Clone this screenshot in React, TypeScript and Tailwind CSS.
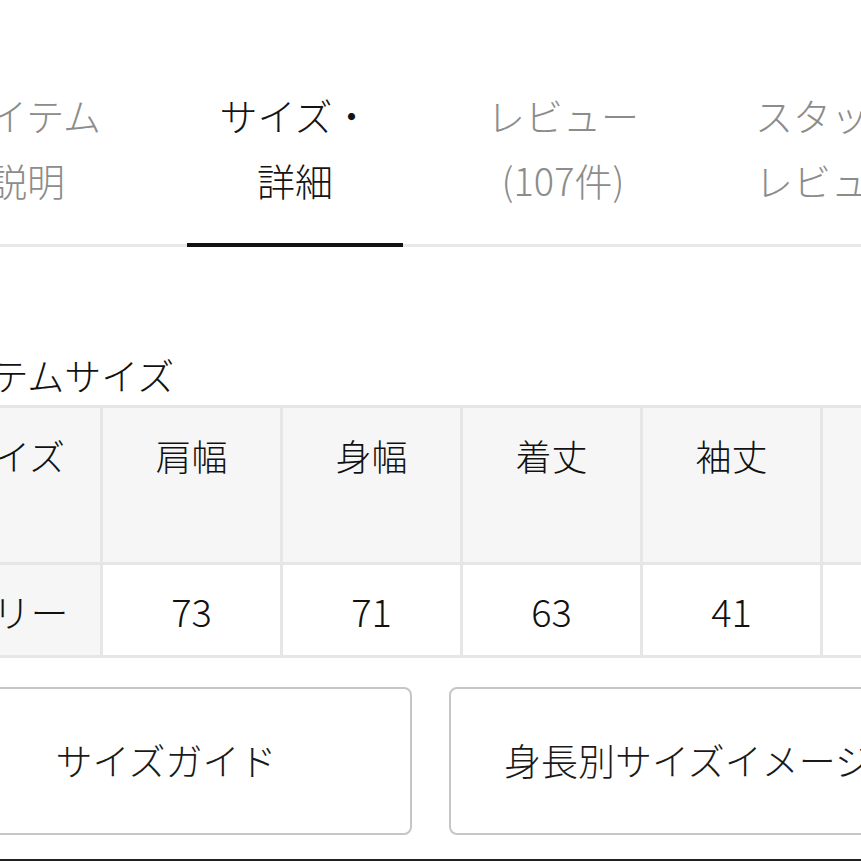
const tabs = [
  { top: 'アイテム', bottom: '説明', active: false },
  { top: 'サイズ・', bottom: '詳細', active: true },
  { top: 'レビュー', bottom: '(107件)', active: false },
  { top: 'スタッフ', bottom: 'レビュー', active: false },
];

const headers = ['サイズ', '肩幅', '身幅', '着丈', '袖丈', '裄丈'];
const values = ['フリー', '73', '71', '63', '41', '-'];

const App = () => {
  return (
    <div
      className="w-[861px] h-[861px] overflow-hidden bg-white text-[#1a1a1a] font-light"
      style={{ fontFamily: '"Noto Sans CJK JP", "Noto Sans", sans-serif' }}
    >
      {/* tabs */}
      <div className="flex w-[1076px] ml-[-107px] border-b-[3px] border-[#e8e8e8]">
        {tabs.map((tab) => (
          <div key={tab.top} className="w-[268px] shrink-0 flex flex-col items-center pt-[82px]">
            <div
              className={`text-[38px] leading-[65px] text-center whitespace-nowrap ${
                tab.active ? 'text-[#141414]' : 'text-[#8c8c8c]'
              }`}
            >
              <div>{tab.top}</div>
              <div>{tab.bottom}</div>
            </div>
            <div
              className={`mt-[31px] mb-[-3px] h-[4px] w-[216px] ${tab.active ? 'bg-[#111]' : 'bg-transparent'}`}
            />
          </div>
        ))}
      </div>

      <div className="ml-[-80px] w-[1021px]">
        <h3 className="mt-[103px] mb-[5px] text-[37px] leading-[50px] font-light whitespace-nowrap text-[#111]">
          アイテムサイズ
        </h3>

        {/* size table */}
        <div className="grid grid-cols-[repeat(6,177px)] gap-[3px] p-[3px] bg-[#e6e6e6] w-max">
          {headers.map((h) => (
            <div
              key={h}
              className="h-[154px] bg-[#f6f6f6] pt-[20px] text-center text-[36px] leading-[54px] text-[#111]"
            >
              {h}
            </div>
          ))}
          {values.map((v, idx) => (
            <div
              key={idx}
              className={`h-[90px] flex items-center justify-center text-[38px] text-[#111] ${
                idx === 0 ? 'bg-[#f6f6f6] text-[36px]' : 'bg-white'
              }`}
            >
              {idx === 5 ? '' : v}
            </div>
          ))}
        </div>

        {/* buttons */}
        <div className="mt-[29px] flex gap-[37px]">
          <button className="w-[492px] h-[148px] shrink-0 rounded-[8px] border-2 border-[#c6c6c6] bg-white text-[37px] text-[#1a1a1a] whitespace-nowrap">
            サイズガイド
          </button>
          <button className="w-[492px] h-[148px] shrink-0 rounded-[8px] border-2 border-[#c6c6c6] bg-white text-[37px] text-[#1a1a1a] whitespace-nowrap pr-[14px]">
            身長別サイズイメージ
          </button>
        </div>
      </div>

      <div className="mt-[24px] h-[4px] bg-[#222]" />
    </div>
  );
};

export default App;
